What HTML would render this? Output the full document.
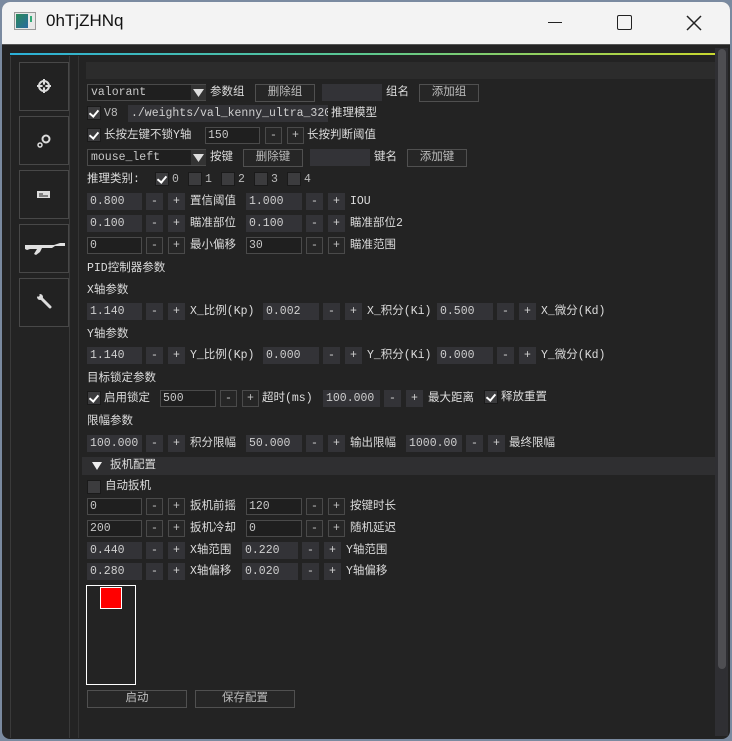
<!DOCTYPE html><html><head><meta charset="utf-8"><style>
*{margin:0;padding:0;box-sizing:border-box}
body{width:732px;height:741px;background:#7a8aa0;position:relative;overflow:hidden;font-family:"Liberation Mono","Noto Sans CJK SC",monospace;font-size:11.5px;color:#dcdcdc}
div,span{position:absolute}
.t{white-space:nowrap;line-height:17px;height:17px;font-family:"Liberation Mono","Noto Sans CJK SC",monospace}
.f{background:#333337;height:17px;line-height:17px;padding-left:3px;color:#cfcfcf;white-space:nowrap;overflow:hidden}
.fr{background:#1f1f1f;border:1px solid #4a4a4a;height:17px;line-height:15px;padding-left:2px;color:#c8c8c8;white-space:nowrap;overflow:hidden}
.b{background:#333337;height:17px;width:17px;line-height:17px;text-align:center;color:#d0d0d0}
.bf{background:#262626;border:1px solid #4a4a4a;height:17px;width:17px;line-height:15px;text-align:center;color:#c0c0c0}
.btn{background:#262626;border:1px solid #505050;height:18px;line-height:16px;text-align:center;color:#bdbdbd}
.cb{width:14px;height:14px;background:#3c3c3e;border:1px solid #1a1a1a}
.cb.on::after{content:"";position:absolute;left:3px;top:1px;width:4px;height:7px;border:solid #fff;border-width:0 2px 2px 0;transform:rotate(40deg)}
.sb{left:19px;width:50px;height:49px;border:1px solid #484848;background:#222}
</style></head><body>
<div style="left:2px;top:2px;width:728px;height:737px;background:#232323;border-radius:8px;overflow:hidden">
<div style="left:0;top:0;width:728px;height:43px;background:#f3f3f3;border-bottom:1px solid #555"></div>
</div>
<div style="left:14px;top:12px;width:22px;height:18px;border:1px solid #999;background:#e8e8e8"><div style="left:1px;top:1px;width:12px;height:14px;background:linear-gradient(135deg,#2a8a5a,#2a6aa0)"></div><div style="left:15px;top:3px;width:2px;height:6px;background:#3a7"></div></div>
<div class="t" style="left:46px;top:10px;font-family:'Liberation Sans',sans-serif;font-size:17px;line-height:22px;height:22px;color:#111">0hTjZHNq</div>
<div style="left:548px;top:22px;width:14px;height:1px;background:#222"></div>
<div style="left:617px;top:15px;width:15px;height:15px;border:1.5px solid #222;border-radius:2px"></div>
<svg style="position:absolute;left:684px;top:13px" width="20" height="20"><path d="M3 3L17 17M17 3L3 17" stroke="#222" stroke-width="1.5"/></svg>
<div style="left:10px;top:53px;width:705px;height:2px;background:linear-gradient(90deg,#2bb0d8,#5cc890 50%,#c8d830)"></div>
<div style="left:10px;top:56px;width:1px;height:682px;background:#3a3a3a"></div>
<div style="left:69px;top:56px;width:1px;height:682px;background:#3a3a3a"></div>
<div style="left:78px;top:56px;width:1px;height:682px;background:#343434"></div>
<div class="sb" style="top:62px"><svg style="position:absolute;left:16px;top:15px" width="16" height="16"><circle cx="8" cy="8" r="5" fill="none" stroke="#ddd" stroke-width="2"/><path d="M8 1V15M1 8H15" stroke="#ddd" stroke-width="2"/><circle cx="8" cy="8" r="1.5" fill="#222"/></svg></div>
<div class="sb" style="top:116px"><svg style="position:absolute;left:16px;top:16px" width="16" height="16"><circle cx="10" cy="6" r="3.5" fill="none" stroke="#ddd" stroke-width="2"/><circle cx="4" cy="12" r="2" fill="none" stroke="#ddd" stroke-width="1.5"/></svg></div>
<div class="sb" style="top:170px"><svg style="position:absolute;left:16px;top:18px" width="16" height="12"><rect x="1" y="2" width="13" height="7" fill="#ddd"/><path d="M3 5H7M3 7H12" stroke="#222"/></svg></div>
<div class="sb" style="top:224px"><svg style="position:absolute;left:4px;top:14px" width="42" height="20"><path d="M1 6H30L36 4H41V7H31L28 9H18L16 13L12 16L10 15L13 10H6L3 11L1 10Z" fill="#e0e0e0"/></svg></div>
<div class="sb" style="top:278px"><svg style="position:absolute;left:16px;top:15px" width="18" height="18"><path d="M3 2L7 6M5 4L14 13" stroke="#ddd" stroke-width="3" stroke-linecap="round"/><circle cx="4" cy="3" r="3" fill="#ddd"/><circle cx="2" cy="1" r="1.6" fill="#222"/></svg></div>
<div style="left:715px;top:48px;width:13px;height:688px;background:#2f2f33"></div>
<div style="left:718px;top:49px;width:8px;height:620px;background:#4e4e52;border-radius:4px"></div>
<div style="left:86px;top:62px;width:629px;height:17px;background:#2c2c2c"></div>
<div class="fr" style="left:87px;top:84px;width:119px;padding-left:3px">valorant</div><div style="left:191px;top:85px;width:15px;height:15px;background:#333"></div><svg style="position:absolute;left:193px;top:89px" width="11" height="8"><path d="M0 0H11L5.5 8Z" fill="#ddd"/></svg>
<div class="t" style="left:210px;top:84px">参数组</div>
<div class="btn" style="left:255px;top:84px;width:60px">删除组</div>
<div class="f" style="left:322px;top:84px;width:60px"></div>
<div class="t" style="left:386px;top:84px">组名</div>
<div class="btn" style="left:419px;top:84px;width:60px">添加组</div>
<div class="cb on" style="left:87px;top:106px"></div><div class="t" style="left:104px;top:105px;color:#bbb">V8</div>
<div class="f" style="left:128px;top:105px;width:200px">./weights/val_kenny_ultra_320</div>
<div class="t" style="left:331px;top:105px">推理模型</div>
<div class="cb on" style="left:87px;top:128px"></div><div class="t" style="left:104px;top:127px">长按左键不锁Y轴</div>
<div class="fr" style="left:205px;top:127px;width:55px">150</div>
<div class="bf" style="left:265px;top:127px">-</div><div class="bf" style="left:287px;top:127px">+</div>
<div class="t" style="left:307px;top:127px">长按判断阈值</div>
<div class="fr" style="left:87px;top:149px;width:119px;padding-left:3px">mouse_left</div><div style="left:191px;top:150px;width:15px;height:15px;background:#333"></div><svg style="position:absolute;left:193px;top:154px" width="11" height="8"><path d="M0 0H11L5.5 8Z" fill="#ddd"/></svg>
<div class="t" style="left:210px;top:149px">按键</div>
<div class="btn" style="left:243px;top:149px;width:60px">删除键</div>
<div class="f" style="left:310px;top:149px;width:60px"></div>
<div class="t" style="left:374px;top:149px">键名</div>
<div class="btn" style="left:407px;top:149px;width:60px">添加键</div>
<div class="t" style="left:87px;top:171px">推理类别:</div>
<div class="cb on" style="left:155px;top:172px"></div><div class="t" style="left:172px;top:171px;color:#bbb">0</div>
<div class="cb" style="left:188px;top:172px"></div><div class="t" style="left:205px;top:171px;color:#bbb">1</div>
<div class="cb" style="left:221px;top:172px"></div><div class="t" style="left:238px;top:171px;color:#bbb">2</div>
<div class="cb" style="left:254px;top:172px"></div><div class="t" style="left:271px;top:171px;color:#bbb">3</div>
<div class="cb" style="left:287px;top:172px"></div><div class="t" style="left:304px;top:171px;color:#bbb">4</div>
<div class="f" style="left:87px;top:193px;width:55px">0.800</div><div class="b" style="left:146px;top:193px">-</div><div class="b" style="left:168px;top:193px">+</div><div class="t" style="left:190px;top:193px">置信阈值</div>
<div class="f" style="left:246px;top:193px;width:56px">1.000</div><div class="b" style="left:306px;top:193px">-</div><div class="b" style="left:328px;top:193px">+</div><div class="t" style="left:350px;top:193px">IOU</div>
<div class="f" style="left:87px;top:215px;width:55px">0.100</div><div class="b" style="left:146px;top:215px">-</div><div class="b" style="left:168px;top:215px">+</div><div class="t" style="left:190px;top:215px">瞄准部位</div>
<div class="f" style="left:246px;top:215px;width:56px">0.100</div><div class="b" style="left:306px;top:215px">-</div><div class="b" style="left:328px;top:215px">+</div><div class="t" style="left:350px;top:215px">瞄准部位2</div>
<div class="fr" style="left:87px;top:237px;width:55px">0</div><div class="bf" style="left:146px;top:237px">-</div><div class="bf" style="left:168px;top:237px">+</div><div class="t" style="left:190px;top:237px">最小偏移</div>
<div class="fr" style="left:246px;top:237px;width:56px">30</div><div class="bf" style="left:306px;top:237px">-</div><div class="bf" style="left:328px;top:237px">+</div><div class="t" style="left:350px;top:237px">瞄准范围</div>
<div class="t" style="left:87px;top:260px">PID控制器参数</div>
<div class="t" style="left:87px;top:282px">X轴参数</div>
<div class="f" style="left:87px;top:303px;width:55px">1.140</div><div class="b" style="left:146px;top:303px">-</div><div class="b" style="left:168px;top:303px">+</div><div class="t" style="left:190px;top:303px">X_比例(Kp)</div>
<div class="f" style="left:263px;top:303px;width:56px">0.002</div><div class="b" style="left:323px;top:303px">-</div><div class="b" style="left:345px;top:303px">+</div><div class="t" style="left:367px;top:303px">X_积分(Ki)</div>
<div class="f" style="left:437px;top:303px;width:56px">0.500</div><div class="b" style="left:497px;top:303px">-</div><div class="b" style="left:519px;top:303px">+</div><div class="t" style="left:541px;top:303px">X_微分(Kd)</div>
<div class="t" style="left:87px;top:326px">Y轴参数</div>
<div class="f" style="left:87px;top:347px;width:55px">1.140</div><div class="b" style="left:146px;top:347px">-</div><div class="b" style="left:168px;top:347px">+</div><div class="t" style="left:190px;top:347px">Y_比例(Kp)</div>
<div class="f" style="left:263px;top:347px;width:56px">0.000</div><div class="b" style="left:323px;top:347px">-</div><div class="b" style="left:345px;top:347px">+</div><div class="t" style="left:367px;top:347px">Y_积分(Ki)</div>
<div class="f" style="left:437px;top:347px;width:56px">0.000</div><div class="b" style="left:497px;top:347px">-</div><div class="b" style="left:519px;top:347px">+</div><div class="t" style="left:541px;top:347px">Y_微分(Kd)</div>
<div class="t" style="left:87px;top:370px">目标锁定参数</div>
<div class="cb on" style="left:87px;top:391px"></div><div class="t" style="left:104px;top:390px">启用锁定</div>
<div class="fr" style="left:160px;top:390px;width:56px">500</div><div class="bf" style="left:220px;top:390px">-</div><div class="bf" style="left:242px;top:390px">+</div><div class="t" style="left:262px;top:390px">超时(ms)</div>
<div class="f" style="left:323px;top:390px;width:57px">100.000</div><div class="b" style="left:384px;top:390px">-</div><div class="b" style="left:406px;top:390px">+</div><div class="t" style="left:428px;top:390px">最大距离</div>
<div class="cb on" style="left:484px;top:390px"></div><div class="t" style="left:501px;top:389px">释放重置</div>
<div class="t" style="left:87px;top:413px">限幅参数</div>
<div class="f" style="left:87px;top:435px;width:55px">100.000</div><div class="b" style="left:146px;top:435px">-</div><div class="b" style="left:168px;top:435px">+</div><div class="t" style="left:190px;top:435px">积分限幅</div>
<div class="f" style="left:246px;top:435px;width:56px">50.000</div><div class="b" style="left:306px;top:435px">-</div><div class="b" style="left:328px;top:435px">+</div><div class="t" style="left:350px;top:435px">输出限幅</div>
<div class="f" style="left:406px;top:435px;width:56px">1000.00</div><div class="b" style="left:466px;top:435px">-</div><div class="b" style="left:488px;top:435px">+</div><div class="t" style="left:509px;top:435px">最终限幅</div>
<div style="left:82px;top:457px;width:633px;height:18px;background:#2f2f31"></div>
<svg style="position:absolute;left:92px;top:462px" width="10" height="8"><path d="M0 0H10L5 8Z" fill="#eee"/></svg>
<div class="t" style="left:110px;top:457px">扳机配置</div>
<div class="cb" style="left:87px;top:480px;background:#3c3c3e"></div><div class="t" style="left:105px;top:478px">自动扳机</div>
<div class="fr" style="left:87px;top:498px;width:55px">0</div><div class="bf" style="left:146px;top:498px">-</div><div class="bf" style="left:168px;top:498px">+</div><div class="t" style="left:190px;top:498px">扳机前摇</div>
<div class="fr" style="left:246px;top:498px;width:56px">120</div><div class="bf" style="left:306px;top:498px">-</div><div class="bf" style="left:328px;top:498px">+</div><div class="t" style="left:350px;top:498px">按键时长</div>
<div class="fr" style="left:87px;top:520px;width:55px">200</div><div class="bf" style="left:146px;top:520px">-</div><div class="bf" style="left:168px;top:520px">+</div><div class="t" style="left:190px;top:520px">扳机冷却</div>
<div class="fr" style="left:246px;top:520px;width:56px">0</div><div class="bf" style="left:306px;top:520px">-</div><div class="bf" style="left:328px;top:520px">+</div><div class="t" style="left:350px;top:520px">随机延迟</div>
<div class="f" style="left:87px;top:542px;width:55px">0.440</div><div class="b" style="left:146px;top:542px">-</div><div class="b" style="left:168px;top:542px">+</div><div class="t" style="left:190px;top:542px">X轴范围</div>
<div class="f" style="left:242px;top:542px;width:56px">0.220</div><div class="b" style="left:302px;top:542px">-</div><div class="b" style="left:324px;top:542px">+</div><div class="t" style="left:346px;top:542px">Y轴范围</div>
<div class="f" style="left:87px;top:563px;width:55px">0.280</div><div class="b" style="left:146px;top:563px">-</div><div class="b" style="left:168px;top:563px">+</div><div class="t" style="left:190px;top:563px">X轴偏移</div>
<div class="f" style="left:242px;top:563px;width:56px">0.020</div><div class="b" style="left:302px;top:563px">-</div><div class="b" style="left:324px;top:563px">+</div><div class="t" style="left:346px;top:563px">Y轴偏移</div>
<div style="left:86px;top:585px;width:50px;height:100px;border:1px solid #fff"></div>
<div style="left:100px;top:587px;width:22px;height:22px;border:1px solid #fff;background:#f00"></div>
<div class="btn" style="left:87px;top:690px;width:100px">启动</div>
<div class="btn" style="left:195px;top:690px;width:100px">保存配置</div>
</body></html>
